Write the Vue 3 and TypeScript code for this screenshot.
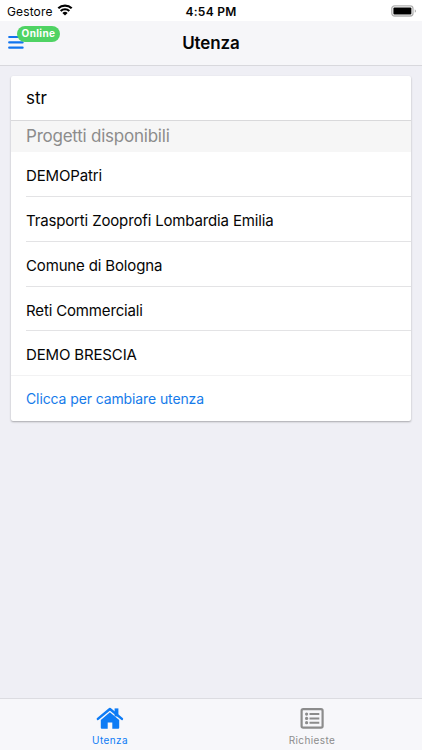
<script setup lang="ts">
const projects: string[] = [
  'DEMOPatri',
  'Trasporti Zooprofi Lombardia Emilia',
  'Comune di Bologna',
  'Reti Commerciali',
  'DEMO BRESCIA',
]
</script>

<template>
  <div class="screen">
    <div class="status">
      <div class="carrier">
        <span>Gestore</span>
        <svg class="wifi" viewBox="0 0 16 12" width="16" height="12">
          <path d="M1.3 4.3a9.6 9.6 0 0 1 13.4 0M3.7 7a6.2 6.2 0 0 1 8.6 0" fill="none" stroke="#000" stroke-width="2.2" />
          <path d="M8 11.5 5.4 9a3.7 3.7 0 0 1 5.2 0z" fill="#000" />
        </svg>
      </div>
      <span class="time">4:54 PM</span>
      <svg class="battery" viewBox="0 0 26 12" width="26" height="12">
        <rect x="1.8" y=".8" width="21.2" height="10.2" rx="2.8" fill="#fff" stroke="#b1b1b1" stroke-width="1.3" />
        <rect x="3.4" y="2.4" width="18" height="7" rx="1" fill="#000" />
        <path d="M24.8 4.2q2 1.8 0 3.6z" fill="#999" />
      </svg>
    </div>
    <header class="navbar">
      <button class="menu" aria-label="Menu">
        <svg viewBox="0 0 16 14" width="16" height="14">
          <path d="M1.2 2h13.4M1.2 7.4h13.4M1.2 12.7h13.4" stroke="#1274ee" stroke-width="2.2" stroke-linecap="round" />
        </svg>
        <span class="badge">Online</span>
      </button>
      <h1>Utenza</h1>
    </header>
    <main>
      <section class="card">
        <div class="search">str</div>
        <div class="divider">Progetti disponibili</div>
        <ul>
          <li v-for="project in projects" :key="project">{{ project }}</li>
        </ul>
        <a class="change">Clicca per cambiare utenza</a>
      </section>
    </main>
    <nav class="tabs">
      <div class="tab active">
        <svg viewBox="0 0 28 24" width="28" height="24">
          <path d="M18.6 2.4h3.8v8h-3.8z" fill="currentColor" />
          <path d="M1.9 12.9 13.9 3l12 9.9" fill="none" stroke="currentColor" stroke-width="2.5" stroke-linecap="round" stroke-linejoin="round" />
          <path d="m13.9 6.3 9.3 7.7v7.8q0 1-1 1h-5.9v-6.4h-4.6v6.4H5.8q-1 0-1-1V14z" fill="currentColor" />
        </svg>
        <span>Utenza</span>
      </div>
      <div class="tab">
        <svg viewBox="0 0 28 24" width="28" height="24">
          <rect x="3.6" y="3.2" width="21" height="18.5" rx="1.6" fill="none" stroke="currentColor" stroke-width="2.2" />
          <path d="M11.5 8.1h9.8M11.5 12.4h9.8M11.5 16.7h9.8" stroke="currentColor" stroke-width="2" />
          <g fill="currentColor"><circle cx="8.6" cy="8.1" r="1.6" /><circle cx="8.6" cy="12.4" r="1.6" /><circle cx="8.6" cy="16.7" r="1.6" /></g>
        </svg>
        <span>Richieste</span>
      </div>
    </nav>
  </div>
</template>

<style>
body { background: #efeff5; }
</style>

<style scoped>
.screen {
  box-sizing: border-box;
  width: 100%;
  height: 100vh;
  display: flex;
  flex-direction: column;
  overflow: hidden;
  background: #efeff5;
  color: #050505;
  font-family: Inter, "Liberation Sans", sans-serif;
}
.status {
  display: grid;
  grid-template-columns: 1fr auto 1fr;
  align-items: center;
  height: 21px;
  padding: 0 6px;
  background: #fff;
  font-size: 12px;
}
.carrier { display: flex; align-items: center; gap: 4px; padding: 1px 0 0 1px; letter-spacing: .13px; }
.wifi { margin-top: -2px; }
.time { padding-top: 1px; font-weight: 600; letter-spacing: .25px; }
.battery { justify-self: end; }
.navbar {
  position: relative;
  box-sizing: border-box;
  display: flex;
  align-items: center;
  justify-content: center;
  height: 45px;
  border-bottom: 1px solid #d8d8dd;
  background: #f6f6f9;
}
.menu { position: absolute; left: 8px; top: 14px; padding: 0; border: 0; background: none; line-height: 0; }
.badge {
  position: absolute;
  left: 9px;
  top: -9px;
  width: 43px;
  height: 16px;
  border-radius: 8px;
  background: #4fd364;
  color: #fff;
  font: 700 10px/15px Inter, sans-serif;
  letter-spacing: .4px;
  text-align: center;
}
h1 { margin: 0; font-size: 17px; font-weight: 600; line-height: 22px; letter-spacing: -.1px; }
main { flex: 1; padding: 10px 11px; }
.card { overflow: hidden; border-radius: 2px; background: #fff; box-shadow: 0 1px 2px rgba(0, 0, 0, .3); }
.search { height: 44px; border-bottom: 1px solid #d9d9db; padding-left: 15px; font-size: 17px; line-height: 44px; letter-spacing: -.05px; }
.divider { height: 31px; padding-left: 15px; background: #f6f6f6; color: #8c8c8c; font-size: 17px; line-height: 30px; letter-spacing: -.23px; }
ul { margin: 0; padding: 0; list-style: none; }
li { box-sizing: border-box; height: 44.85px; margin-left: 15px; border-bottom: 1px solid #e3e3e5; font-size: 15px; line-height: 47px; letter-spacing: -.15px; }
li:last-child { margin-left: 0; padding-left: 15px; border-color: #f2f2f3; }
.change { display: block; height: 44.5px; padding-left: 15px; color: #167bea; font-size: 14px; line-height: 45px; letter-spacing: -.11px; }
.tabs { box-sizing: border-box; display: flex; height: 52px; padding: 0 9px; border-top: 1px solid #dcdce1; background: #f7f7fa; }
.tab { flex: 1; display: flex; flex-direction: column; align-items: center; padding-top: 7px; color: #8c8c8c; font-size: 10px; line-height: 14px; letter-spacing: .4px; }
.tab svg { margin-bottom: 3px; }
.active { color: #0d7bf5; }
</style>
